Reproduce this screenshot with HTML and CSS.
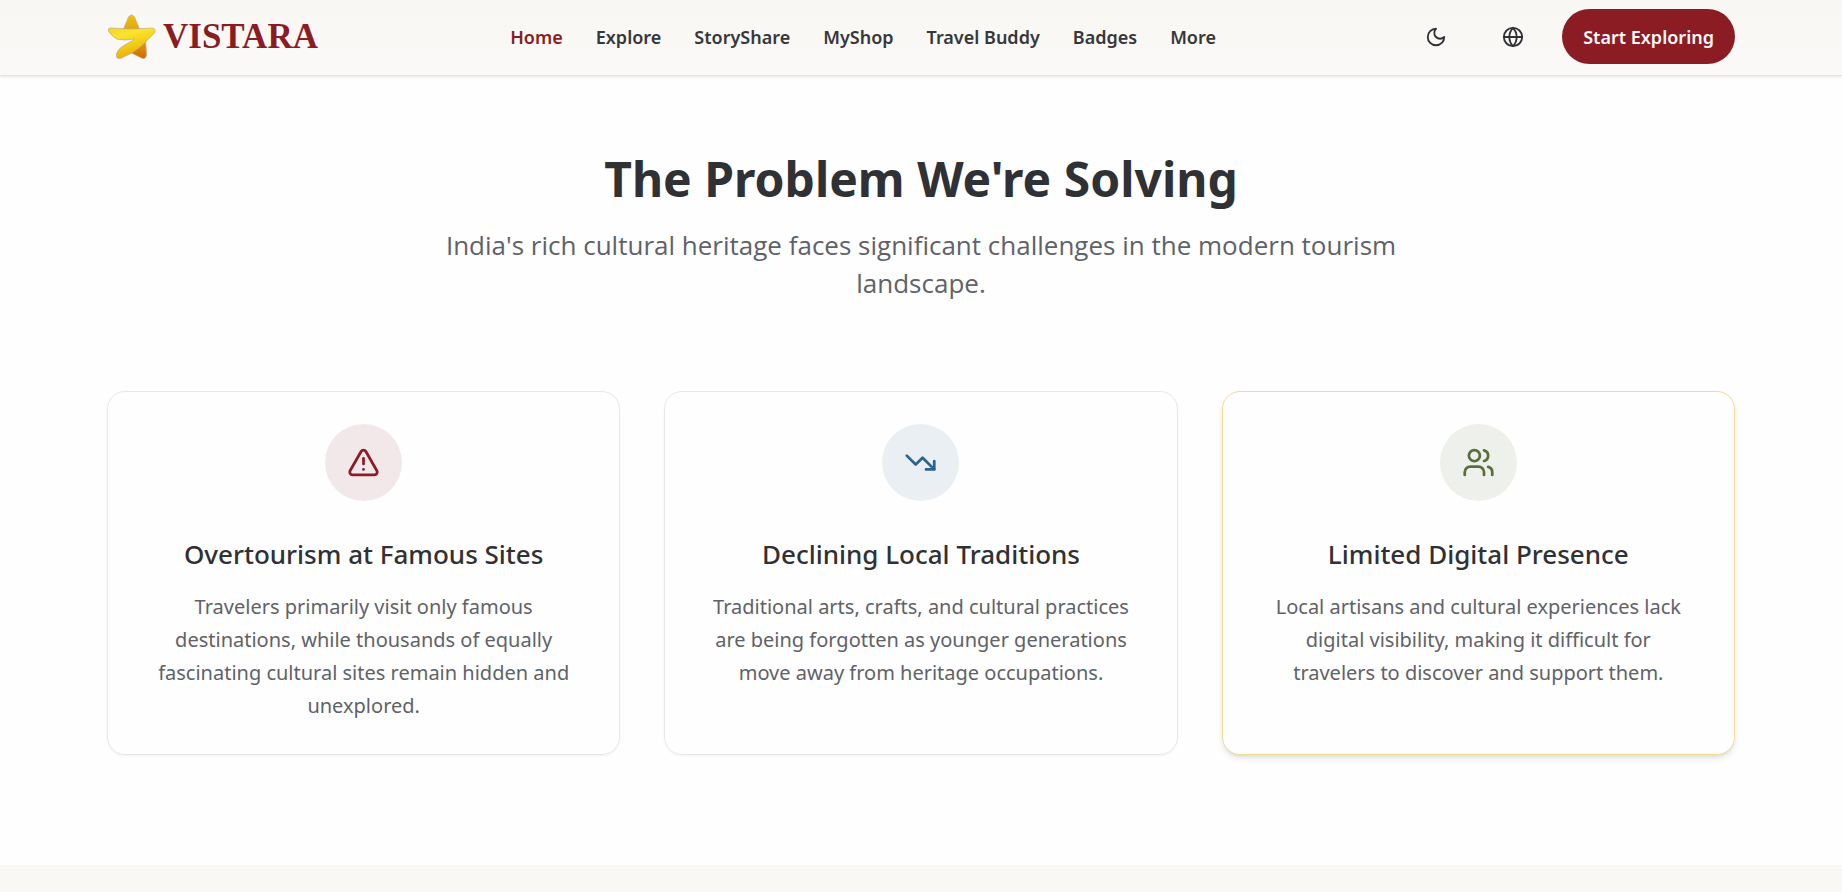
FILE: index.html
```html
<!DOCTYPE html>
<html lang="en">
<head>
<meta charset="utf-8">
<meta name="viewport" content="width=device-width, initial-scale=1">
<title>Vistara</title>
<link rel="stylesheet" href="styles.css">
</head>
<body>
<header class="site-header">
  <div class="container header-row">
    <a class="brand" href="#">
      <svg class="brand-star" viewBox="0 0 48 46" aria-hidden="true">
        <defs>
          <linearGradient id="top" x1="0" y1="0" x2="0" y2="1"><stop offset="0" stop-color="#f0c01a"/><stop offset="1" stop-color="#dfa000"/></linearGradient>
          <linearGradient id="foot" x1="0" y1="0" x2="0" y2="1"><stop offset="0" stop-color="#e9a010"/><stop offset="1" stop-color="#d06a00"/></linearGradient>
          <linearGradient id="band" x1="0" y1="0" x2="0.4" y2="1"><stop offset="0" stop-color="#f5d31c"/><stop offset="0.3" stop-color="#fbe430"/><stop offset="0.65" stop-color="#f2cc14"/><stop offset="1" stop-color="#eda90d"/></linearGradient>
        </defs>
        <g stroke="#b9ad86" stroke-width="0.7" stroke-linejoin="round">
          <path fill="url(#top)" d="M16 15 21 3Q24-1 27 3L32 15 24 19Z"/>
          <path fill="url(#foot)" d="M22 40 38 25 39 41Q38 46 34 44L24 39Z"/>
          <path fill="url(#band)" d="M3 14Q24 16 45 14Q49 15 47 19L38 28Q30 37 14 44Q8 46 9 40C11 32 21 30 27 25Q17 27 9 25Q3 21 1 17Q0 14 3 14Z"/>
        </g>
      </svg>
      <span class="brand-name">VISTARA</span>
    </a>
    <nav class="main-nav" aria-label="Main">
      <a class="nav-link active" href="#">Home</a>
      <a class="nav-link" href="#">Explore</a>
      <a class="nav-link" href="#">StoryShare</a>
      <a class="nav-link" href="#">MyShop</a>
      <a class="nav-link" href="#">Travel Buddy</a>
      <a class="nav-link" href="#">Badges</a>
      <a class="nav-link" href="#">More</a>
    </nav>
    <div class="actions">
      <button class="icon-button" type="button" aria-label="Toggle dark mode">
        <svg class="icon" viewBox="0 0 24 24" aria-hidden="true"><path d="M12 3a6 6 0 0 0 9 9 9 9 0 1 1-9-9Z"/></svg>
      </button>
      <button class="icon-button" type="button" aria-label="Change language">
        <svg class="icon" viewBox="0 0 24 24" aria-hidden="true"><circle cx="12" cy="12" r="10"/><path d="M12 2a14.5 14.5 0 0 0 0 20 14.5 14.5 0 0 0 0-20"/><path d="M2 12h20"/></svg>
      </button>
      <button class="cta" type="button">Start Exploring</button>
    </div>
  </div>
</header>
<main>
  <section class="problem">
    <div class="container">
      <div class="intro">
        <h2 class="title">The Problem We're Solving</h2>
        <p class="lead">India's rich cultural heritage faces significant challenges in the modern tourism landscape.</p>
      </div>
      <div class="cards">
        <article class="card">
          <div class="badge badge-red">
            <svg class="badge-icon" viewBox="0 0 24 24" aria-hidden="true"><path d="m21.73 18-8-14a2 2 0 0 0-3.48 0l-8 14A2 2 0 0 0 4 21h16a2 2 0 0 0 1.73-3"/><path d="M12 9v4"/><path d="M12 17h.01"/></svg>
          </div>
          <h3 class="card-title">Overtourism at Famous Sites</h3>
          <p class="card-text">Travelers primarily visit only famous destinations, while thousands of equally fascinating cultural sites remain hidden and unexplored.</p>
        </article>
        <article class="card">
          <div class="badge badge-blue">
            <svg class="badge-icon" viewBox="0 0 24 24" aria-hidden="true"><path d="m22 17-8.5-8.5-5 5L2 7"/><path d="M16 17h6v-6"/></svg>
          </div>
          <h3 class="card-title">Declining Local Traditions</h3>
          <p class="card-text">Traditional arts, crafts, and cultural practices are being forgotten as younger generations move away from heritage occupations.</p>
        </article>
        <article class="card highlighted">
          <div class="badge badge-green">
            <svg class="badge-icon" viewBox="0 0 24 24" aria-hidden="true"><path d="M16 21v-2a4 4 0 0 0-4-4H6a4 4 0 0 0-4 4v2"/><circle cx="9" cy="7" r="4"/><path d="M22 21v-2a4 4 0 0 0-3-3.87"/><path d="M16 3.13a4 4 0 0 1 0 7.75"/></svg>
          </div>
          <h3 class="card-title">Limited Digital Presence</h3>
          <p class="card-text">Local artisans and cultural experiences lack digital visibility, making it difficult for travelers to discover and support them.</p>
        </article>
      </div>
    </div>
  </section>
  <section class="next-section"></section>
</main>
</body>
</html>
```
FILE: styles.css
```css
*, *::before, *::after { box-sizing: border-box; }

body {
  margin: 0;
  min-height: 100vh;
  display: flex;
  flex-direction: column;
  background: #fefefe;
  color: #303135;
  font-family: "Noto Sans", "Open Sans", sans-serif;
}

main { flex: 1; display: flex; flex-direction: column; }
h2, h3, p { margin: 0; }
button { font: inherit; border: 0; padding: 0; cursor: pointer; }
a { text-decoration: none; }
svg { display: block; }

.container {
  width: 100%;
  max-width: 1672px;
  margin: 0 auto;
  padding: 0 22px;
}

.site-header {
  position: relative;
  background: linear-gradient(#f8f7f3, #fbf9f8);
  border-bottom: 1px solid #e4e4e5;
  box-shadow: 0 1px 3px rgba(0, 0, 0, 0.1);
}

.header-row {
  display: flex;
  align-items: center;
  justify-content: space-between;
  padding-top: 9px;
  padding-bottom: 11px;
}

.brand { display: flex; align-items: center; gap: 7px; color: #8b1c24; }
.brand-star { width: 49px; height: 46px; }
.brand-name { font: bold 35px/44px "Liberation Serif", serif; }

.main-nav { display: flex; gap: 33px; }
.nav-link { color: #36373b; font-size: 18px; font-weight: 600; line-height: 28px; }
.nav-link.active { color: #8b1c24; }

.actions { display: flex; align-items: center; gap: 22px; }
.icon-button {
  display: grid;
  place-items: center;
  width: 55px;
  height: 55px;
  border-radius: 28px;
  background: transparent;
  color: #303135;
}
.icon, .badge-icon {
  fill: none;
  stroke: currentColor;
  stroke-width: 2;
  stroke-linecap: round;
  stroke-linejoin: round;
}
.icon { width: 22px; height: 22px; }
.cta {
  height: 55px;
  padding: 0 21px;
  border-radius: 28px;
  background: #8b1c24;
  color: #fbf9f8;
  font-size: 18px;
  font-weight: 600;
}

.problem { padding: 76px 0 110px; }
.intro { max-width: 984px; margin: 0 auto 89px; text-align: center; }
.title { margin-bottom: 20px; font-size: 48px; font-weight: 700; line-height: 54px; }
.lead { color: #606268; font-family: "Open Sans", sans-serif; font-size: 26px; line-height: 38px; }

.cards { display: grid; grid-template-columns: repeat(3, 1fr); gap: 44px; }
.card {
  display: flex;
  flex-direction: column;
  align-items: center;
  padding: 32px 42px;
  border: 1px solid #e8e8e9;
  border-radius: 18px;
  box-shadow: 0 1px 2px rgba(0, 0, 0, 0.05);
  text-align: center;
}
.card.highlighted {
  border-color: #f3dc95;
  background: #fefefe;
  box-shadow: 0 4px 7px -1px rgba(0, 0, 0, 0.1), 0 2px 4px -2px rgba(0, 0, 0, 0.1);
}

.badge {
  display: grid;
  place-items: center;
  width: 77px;
  height: 77px;
  margin-bottom: 33px;
  border-radius: 50%;
}
.badge-icon { width: 33px; height: 33px; }
.badge-red { background: #f2e8ea; color: #8b1c2a; }
.badge-blue { background: #e9eff3; color: #2c6493; }
.badge-green { background: #eef0eb; color: #5a6f3c; }

.card-title { margin-bottom: 16px; font-size: 26px; font-weight: 500; line-height: 40px; }
.card-text { color: #606268; font-size: 20px; line-height: 33px; }

.next-section { flex: 1; background: #f9f8f4; }
```
